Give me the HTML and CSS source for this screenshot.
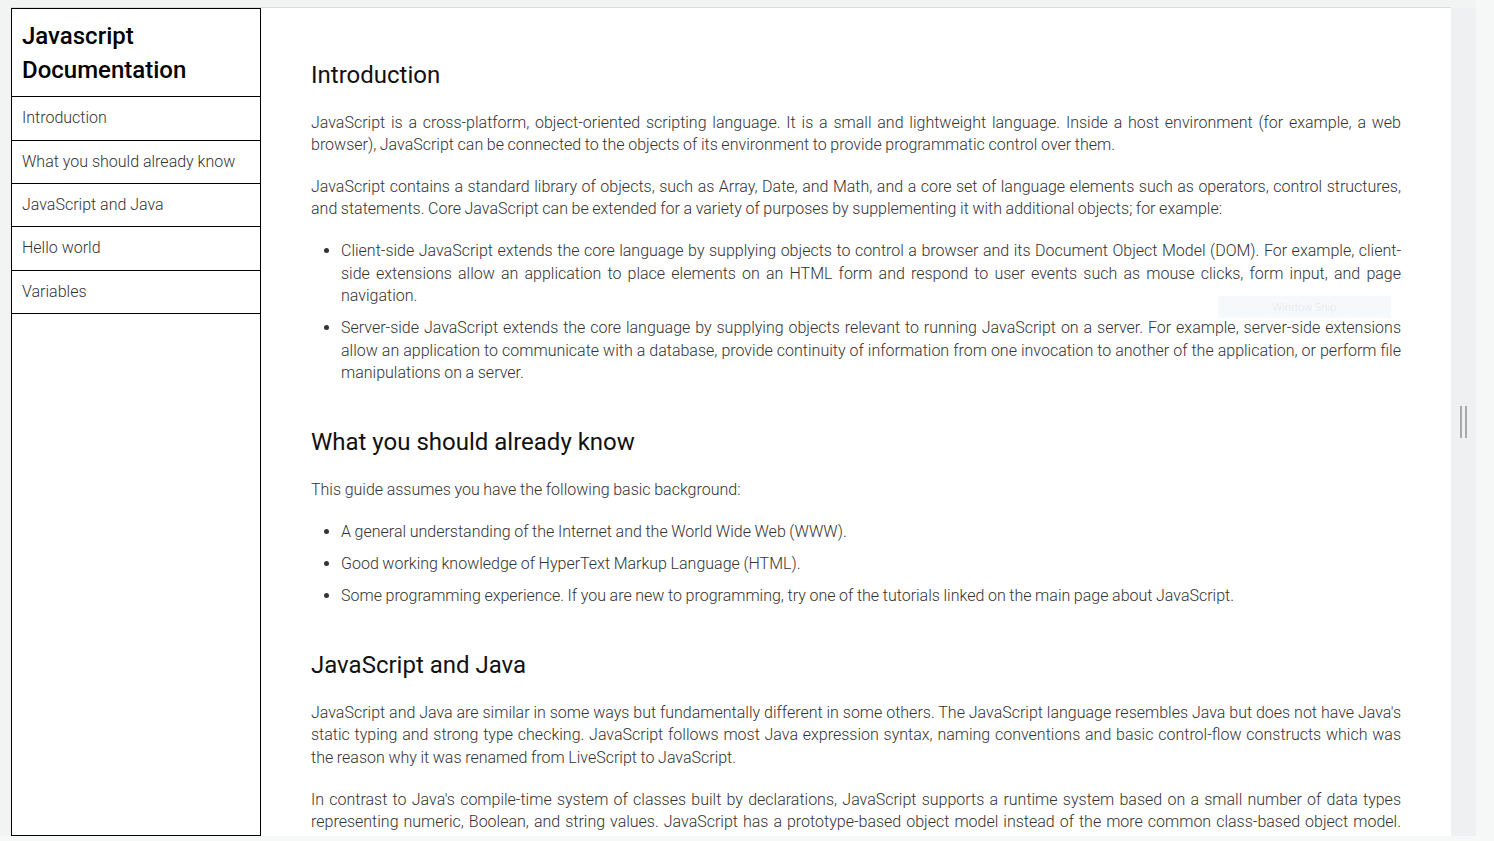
FILE: index.html
```html
<!DOCTYPE html>
<html lang="en">
<head>
<meta charset="utf-8">
<title>Javascript Documentation</title>
<link rel="stylesheet" href="styles.css">
</head>
<body>
<div class="shell">
  <div class="frame">
    <nav class="nav" id="navbar">
      <header class="nav-title">Javascript Documentation</header>
      <a class="nav-link" href="#Introduction">Introduction</a>
      <a class="nav-link" href="#What_you_should_already_know">What you should already know</a>
      <a class="nav-link" href="#JavaScript_and_Java">JavaScript and Java</a>
      <a class="nav-link" href="#Hello_world">Hello world</a>
      <a class="nav-link" href="#Variables">Variables</a>
    </nav>
    <main class="main" id="main-doc">
      <section class="section" id="Introduction">
        <h2 class="section-title">Introduction</h2>
        <p>JavaScript is a cross-platform, object-oriented scripting language. It is a small and lightweight language. Inside a host environment (for example, a web browser), JavaScript can be connected to the objects of its environment to provide programmatic control over them.</p>
        <p>JavaScript contains a standard library of objects, such as Array, Date, and Math, and a core set of language elements such as operators, control structures, and statements. Core JavaScript can be extended for a variety of purposes by supplementing it with additional objects; for example:</p>
        <ul>
          <li>Client-side JavaScript extends the core language by supplying objects to control a browser and its Document Object Model (DOM). For example, client-side extensions allow an application to place elements on an HTML form and respond to user events such as mouse clicks, form input, and page navigation.</li>
          <li>Server-side JavaScript extends the core language by supplying objects relevant to running JavaScript on a server. For example, server-side extensions allow an application to communicate with a database, provide continuity of information from one invocation to another of the application, or perform file manipulations on a server.</li>
        </ul>
      </section>
      <section class="section" id="What_you_should_already_know">
        <h2 class="section-title">What you should already know</h2>
        <p>This guide assumes you have the following basic background:</p>
        <ul>
          <li>A general understanding of the Internet and the World Wide Web (WWW).</li>
          <li>Good working knowledge of HyperText Markup Language (HTML).</li>
          <li>Some programming experience. If you are new to programming, try one of the tutorials linked on the main page about JavaScript.</li>
        </ul>
      </section>
      <section class="section" id="JavaScript_and_Java">
        <h2 class="section-title">JavaScript and Java</h2>
        <p>JavaScript and Java are similar in some ways but fundamentally different in some others. The JavaScript language resembles Java but does not have Java's static typing and strong type checking. JavaScript follows most Java expression syntax, naming conventions and basic control-flow constructs which was the reason why it was renamed from LiveScript to JavaScript.</p>
        <p>In contrast to Java's compile-time system of classes built by declarations, JavaScript supports a runtime system based on a small number of data types representing numeric, Boolean, and string values. JavaScript has a prototype-based object model instead of the more common class-based object model. The prototype-based model provides dynamic inheritance; that is, what is inherited can vary for individual objects.</p>
      </section>
    </main>
    <div class="snip">Window Snip</div>
  </div>
  <div class="handle"><span class="grip"></span><span class="grip"></span></div>
</div>
</body>
</html>
```

FILE: styles.css
```css
* { box-sizing: border-box; }

html, body {
  margin: 0;
  height: 841px;
  overflow: hidden;
}

body {
  background: #f6f7f7;
  font-family: Roboto, "Liberation Sans", sans-serif;
  font-weight: 300;
  font-size: 16px;
  line-height: 1.4;
  color: #333;
}

.shell {
  display: flex;
  align-items: flex-start;
  width: 1476px;
  height: 836px;
  padding: 8px 0 0 11px;
  background: #f2f3f3;
}

.frame {
  position: relative;
  display: flex;
  width: 1440px;
  height: 828px;
  background: #fff;
  box-shadow: 0 -1px 0 #dcdcdc;
}

.nav {
  flex: 0 0 250px;
  height: 828px;
  border: 1px solid #000;
  display: flex;
  flex-direction: column;
  background: #fff;
}

.nav-title {
  padding: 11px 10px 9px;
  font-size: 24px;
  font-weight: 500;
  line-height: 1.4;
  color: #000;
  border-bottom: 1px solid #000;
}

.nav-link {
  display: block;
  padding: 10px 10px;
  border-bottom: 1px solid #000;
  color: #333;
  text-decoration: none;
  font-size: 16px;
  line-height: 1.4;
}

.main {
  flex: 1;
  height: 828px;
  overflow: hidden;
  padding: 51px 50px;
  text-align: justify;
  word-spacing: -0.3px;
}

.section-title {
  margin: 42px 0 20.5px;
  font-size: 24px;
  font-weight: 400;
  line-height: 32px;
  color: #111;
  word-spacing: 0;
}

.section:first-child .section-title {
  margin-top: 0;
}

.main p {
  margin: 0 0 19.6px;
}

.main ul {
  margin: 0;
  padding-left: 30px;
}

.main li {
  margin-bottom: 9.7px;
}

.main li:last-child {
  margin-bottom: 0;
}

.snip {
  position: absolute;
  left: 1207px;
  top: 288px;
  width: 173px;
  height: 22px;
  background: #f6f9fc;
  color: #e4e6e8;
  font-family: "Open Sans", sans-serif;
  font-size: 11px;
  line-height: 22px;
  text-align: center;
}

.handle {
  width: 25px;
  height: 828px;
  background: #eff0f2;
  display: flex;
  align-items: center;
  justify-content: center;
  gap: 3px;
}

.grip {
  width: 2px;
  height: 32px;
  background: #a9a9a9;
}
```
